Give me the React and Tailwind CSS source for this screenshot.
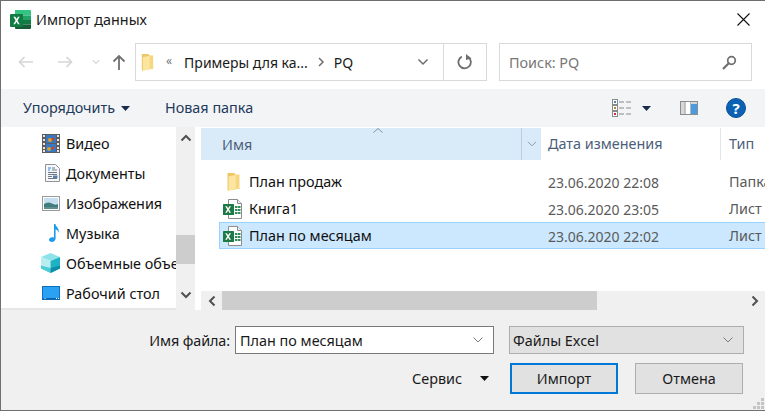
import React from 'react';

const ChevronDown = ({ className = '', color = '#6d6d6d', w = 1.5 }) => (
  <svg width="12" height="8" viewBox="0 0 12 8" className={className}>
    <path d="M1.5 1.5 6 6l4.5-4.5" fill="none" stroke={color} strokeWidth={w} />
  </svg>
);

const Caret = ({ color = '#1b2b4b', className = '' }) => (
  <svg width="9" height="5" viewBox="0 0 9 5" className={className}>
    <path d="M0 0h9L4.5 5z" fill={color} />
  </svg>
);

const ExcelLogo = () => (
  <svg width="21" height="20" viewBox="0 0 21 20">
    <path d="M5 0h15a1 1 0 0 1 1 1v4.5H5z" fill="#33c481" />
    <rect x="13" y="5.5" width="8" height="4.5" fill="#21a366" />
    <rect x="5" y="5.5" width="8" height="4.5" fill="#107c41" />
    <rect x="13" y="10" width="8" height="4.5" fill="#107c41" />
    <rect x="5" y="10" width="8" height="5" fill="#185c37" />
    <path d="M5 14.5h16V18a1 1 0 0 1-1 1H6a1 1 0 0 1-1-1z" fill="#185c37" />
    <rect x="0" y="4" width="13" height="13" rx="1" fill="#107c41" />
    <path d="M3.4 6.8h1.9l1.3 2.3 1.3-2.3h1.8l-2.2 3.7 2.2 3.7H7.9l-1.4-2.4-1.4 2.4H3.3l2.3-3.7z" fill="#fff" />
  </svg>
);

const ExcelFile = () => (
  <svg width="22" height="22" viewBox="0 0 22 22">
    <path d="M6.5 1.5h9l4 4v15h-13z" fill="#fff" stroke="#8c8c8c" />
    <path d="M15.5 1.5v4h4" fill="#eee" stroke="#8c8c8c" />
    <g fill="#2f8f5b">
      <rect x="13" y="8" width="2.5" height="2" />
      <rect x="16" y="8" width="2.5" height="2" />
      <rect x="13" y="11" width="2.5" height="2" />
      <rect x="16" y="11" width="2.5" height="2" />
      <rect x="13" y="14" width="2.5" height="2" />
      <rect x="16" y="14" width="2.5" height="2" />
    </g>
    <rect x="1" y="6" width="11" height="11" rx="0.5" fill="#1d7a45" />
    <path d="M3.2 8.2h1.7l1.2 2 1.2-2H9l-2 3.2 2 3.3H7.3l-1.2-2.1-1.2 2.1H3.2l2-3.3z" fill="#fff" />
  </svg>
);

const Folder = ({ h = 19 }) => (
  <svg width="13" height={h} viewBox="0 0 13 19">
    <path d="M1 1h6.500l1 1.500V17.500L1 18.500z" fill="#eec766" />
    <path d="M8.500 2.500H12.500V17H8.500z" fill="#f6d67f" />
    <path d="M1 4.500 8.500 3v14.500L1 18.500z" fill="#fbe59f" />
    <path d="M1 1v17.500" stroke="#e2b84f" strokeWidth="0.7" />
  </svg>
);

const VideoIcon = () => (
  <svg width="18" height="19" viewBox="0 0 18 19">
    <rect width="18" height="19" fill="#5c5c5c" />
    <g fill="#e8e8e8">
      <rect x="1" y="1" width="2" height="2" /><rect x="1" y="5" width="2" height="2" />
      <rect x="1" y="9" width="2" height="2" /><rect x="1" y="13" width="2" height="2" />
      <rect x="1" y="16" width="2" height="2" /><rect x="15" y="1" width="2" height="2" />
      <rect x="15" y="5" width="2" height="2" /><rect x="15" y="9" width="2" height="2" />
      <rect x="15" y="13" width="2" height="2" /><rect x="15" y="16" width="2" height="2" />
    </g>
    <rect x="4" y="1" width="10" height="8" fill="#3b78c4" />
    <rect x="4" y="10" width="10" height="8" fill="#3b78c4" />
    <circle cx="8" cy="6" r="2" fill="#d9a02c" /><circle cx="11" cy="5" r="1.5" fill="#c8452e" />
    <circle cx="7" cy="15" r="2" fill="#d9a02c" /><circle cx="11" cy="14" r="1.5" fill="#c8452e" />
  </svg>
);

const DocIcon = () => (
  <svg width="15" height="18" viewBox="0 0 15 18">
    <path d="M.5.5h10l4 4v13H.5z" fill="#f5f7fa" stroke="#8f9499" />
    <path d="M3 4h3M3 6h2" stroke="#2f86d9" strokeWidth="1.2" />
    <path d="M7 4h3M7 6h5M3 8.5h9M3 10.5h9M3 12.5h4M3 14.5h9" stroke="#6d7a88" />
    <rect x="8" y="11.5" width="4.5" height="2.5" fill="#5a7fa6" />
  </svg>
);

const ImageIcon = () => (
  <svg width="18" height="15" viewBox="0 0 18 15">
    <rect x="0.5" y="0.5" width="17" height="14" fill="#fff" stroke="#9a9a9a" />
    <rect x="2" y="2" width="14" height="11" fill="#c4dff0" />
    <path d="M2 8c3-2 6-2 9 0 2 1 3.5 1 5 0v5H2z" fill="#3f7c7d" />
    <path d="M2 11h14v2H2z" fill="#5f9090" />
  </svg>
);

const MusicIcon = () => (
  <svg width="12" height="20" viewBox="0 0 12 20">
    <path d="M6 1h1.4c.3 3 4.4 4 3.2 9-.4-2.500-2-3.400-3-3.800V15.500c0 2.300-2.400 3.800-4.600 3.300C.9 18.400.3 16.500 1.700 15.200c1.200-1.100 3-1.300 4.300-.7z" fill="#1a9bf0" />
  </svg>
);

const CubeIcon = () => (
  <svg width="19" height="20" viewBox="0 0 19 20">
    <path d="M9.500 0 19 4 9.500 8 0 4z" fill="#8ee3e8" />
    <path d="M0 4l9.500 4v12L0 15.500z" fill="#b7eef0" />
    <path d="M19 4 9.500 8v12l9.500-4.500z" fill="#1fb1c4" />
    <path d="M0 12.500 9.500 15v5L0 15.500z" fill="#4fcbd6" />
    <path d="M19 12.500 9.500 15v5l9.500-4.500z" fill="#0d8fa8" />
  </svg>
);

const DesktopIcon = () => (
  <svg width="18" height="14" viewBox="0 0 18 14">
    <rect x="0.5" y="0.500" width="17" height="13" fill="#2aa1f2" stroke="#0d6fc0" />
    <path d="M1 12h16v1.500H1z" fill="#0b64ad" />
    <path d="M2.500 12.500h1M14 12.500h1M16 12.500h1" stroke="#fff" />
  </svg>
);

const ListViewIcon = () => (
  <svg width="19" height="18" viewBox="0 0 19 18">
    <g fill="#fff" stroke="#8a8a8a">
      <rect x="0.5" y="0.500" width="5" height="5" />
      <rect x="0.500" y="6.500" width="5" height="5" />
      <rect x="0.500" y="12.500" width="5" height="5" />
    </g>
    <rect x="2" y="2" width="2" height="2" fill="#3b86c9" />
    <rect x="2" y="8" width="2" height="2" fill="#b58a2f" />
    <rect x="2" y="14" width="2" height="2" fill="#cc3333" />
    <path d="M7 3h5M14 3h5M7 9h5M14 9h5M7 15h5M14 15h5" stroke="#8a8a8a" />
  </svg>
);

const PaneIcon = () => (
  <svg width="18" height="14" viewBox="0 0 18 14">
    <rect x="0.500" y="0.500" width="17" height="13" fill="#fff" stroke="#8d8d8d" />
    <path d="M1 1h3.500v12H1z" fill="#d8d8d8" />
    <path d="M5 1v12" stroke="#8d8d8d" />
    <path d="M10.500 1v12" stroke="#b5b5b5" />
    <path d="M11 3h6v10h-6z" fill="#4a9ae0" />
    <path d="M11 1h6v2h-6z" fill="#d6d6d6" />
  </svg>
);

const navItems = [
  { label: 'Видео', icon: <VideoIcon /> },
  { label: 'Документы', icon: <DocIcon /> },
  { label: 'Изображения', icon: <ImageIcon /> },
  { label: 'Музыка', icon: <MusicIcon /> },
  { label: 'Объемные объекты', icon: <CubeIcon /> },
  { label: 'Рабочий стол', icon: <DesktopIcon /> },
];

const files = [
  { name: 'План продаж', date: '23.06.2020 22:08', type: 'Папка с файлами', icon: <Folder /> },
  { name: 'Книга1', date: '23.06.2020 23:05', type: 'Лист Microsoft Excel', icon: <ExcelFile /> },
  { name: 'План по месяцам', date: '23.06.2020 22:02', type: 'Лист Microsoft Excel', icon: <ExcelFile />, selected: true },
];

export default function App() {
  return (
    <div className="w-[765px] h-[411px] overflow-hidden bg-white flex flex-col border-t border-l border-b border-[#6f6f6f] text-[14.4px] leading-none text-black font-['Noto_Sans',sans-serif]">
      {/* title bar */}
      <div className="h-[42px] shrink-0 flex items-center pl-[9px]">
        <div className="-mt-[5px]"><ExcelLogo /></div>
        <span className="ml-[5px] -mt-[3px] text-[#1a1a1a]">Импорт данных</span>
        <svg width="13" height="13" viewBox="0 0 13 13" className="ml-auto mr-[15px] -mt-[5px]">
          <path d="M.5.5l12 12M12.500.5l-12 12" stroke="#111" strokeWidth="1.100" />
        </svg>
      </div>

      {/* address row */}
      <div className="h-[46px] shrink-0 flex items-start">
        <div className="w-[134px] h-[38px] shrink-0 flex items-center pl-[17px]">
          <svg width="16" height="12" viewBox="0 0 16 12"><path d="M15 6H2M6.500 1 1.500 6l5 5" fill="none" stroke="#d6d6d6" strokeWidth="1.700" /></svg>
          <svg width="16" height="12" viewBox="0 0 16 12" className="ml-[23px]"><path d="M1 6h13M9.500 1l5 5-5 5" fill="none" stroke="#d6d6d6" strokeWidth="1.700" /></svg>
          <ChevronDown color="#d6d6d6" className="ml-[17px] scale-75" />
          <svg width="14" height="16" viewBox="0 0 14 16" className="ml-[10px]"><path d="M7 16V2M1.500 7.500 7 2l5.500 5.500" fill="none" stroke="#6f6f6f" strokeWidth="1.800" /></svg>
        </div>
        <div className="w-[352px] h-[38px] shrink-0 border border-[#d9d9d9] flex items-center text-[14px]">
          <div className="ml-[5px]"><Folder h={18} /></div>
          <span className="ml-[12px] text-[#777] text-[12px] -mt-[2px]">«</span>
          <span className="ml-[12px] pt-[2px] text-[#1a1a1a]">Примеры для ка...</span>
          <svg width="7" height="10" viewBox="0 0 7 10" className="ml-[10px]"><path d="M1 1l4 4-4 4" fill="none" stroke="#6d6d6d" strokeWidth="1.500" /></svg>
          <span className="ml-[9px] pt-[2px] text-[#1a1a1a]">PQ</span>
          <ChevronDown className="ml-auto mr-[14px]" />
          <div className="w-[43px] h-full border-l border-[#d9d9d9] flex items-center justify-center">
            <svg width="16" height="16" viewBox="0 0 16 16">
              <path d="M10.800 2.800A6.200 6.200 0 1 1 4.800 2.600" fill="none" stroke="#6d6d6d" strokeWidth="1.800" />
              <path d="M9 0v6l5.500-1.500z" fill="#6d6d6d" />
            </svg>
          </div>
        </div>
        <div className="ml-[12px] w-[253px] h-[38px] shrink-0 border border-[#d9d9d9] flex items-center justify-between pl-[9px] pr-[14px]">
          <span className="text-[#777] pt-[2px]">Поиск: PQ</span>
          <svg width="15" height="15" viewBox="0 0 15 15"><circle cx="9.500" cy="5.500" r="3.800" fill="none" stroke="#6d6d6d" strokeWidth="1.700" /><path d="M6.500 8.500 1 14" stroke="#6d6d6d" strokeWidth="2.200" /></svg>
        </div>
      </div>

      {/* toolbar */}
      <div className="h-[38px] shrink-0 bg-[#f3f4f6] flex items-center pl-[22px] text-[#1e395b]">
        <span>Упорядочить</span>
        <Caret className="ml-[6px]" />
        <span className="ml-[35px]">Новая папка</span>
        <div className="ml-auto flex items-center mr-[19px]">
          <ListViewIcon />
          <Caret className="ml-[11px]" />
          <div className="ml-[29px]"><PaneIcon /></div>
          <div className="ml-[28px] w-[20px] h-[20px] rounded-full bg-[#0b62b5] border border-[#0a4f94] flex items-center justify-center text-white font-bold text-[15px]">?</div>
        </div>
      </div>

      {/* main area */}
      <div className="h-[183px] shrink-0 flex bg-white">
        <div className="w-[175px] shrink-0 flex flex-col overflow-hidden border-b-2 border-[#e6e6e6]">
          {navItems.map((item) => (
            <div key={item.label} className="h-[30px] shrink-0 flex items-center whitespace-nowrap first:mt-[1px]">
              <div className="w-[65px] shrink-0 flex justify-end pr-[6px]">{item.icon}</div>
              <span className="text-[#111] pt-[2px]">{item.label}</span>
            </div>
          ))}
        </div>
        <div className="w-[19px] shrink-0 bg-[#f0f0f0] flex flex-col items-center">
          <ChevronDown color="#505050" w={2} className="mt-[7px] rotate-180" />
          <div className="mt-[93px] w-full h-[29px] bg-[#cdcdcd]" />
          <ChevronDown color="#505050" w={2} className="mt-[27px]" />
        </div>
        <div className="w-[6px] shrink-0" />

        <div className="flex-1 min-w-0 flex flex-col overflow-hidden">
          <div className="h-[32px] shrink-0 mt-px flex text-[#4c607a]">
            <div className="w-[340px] shrink-0 bg-[#d9ebf9] relative flex">
              <span className="pl-[21px] pt-[2px] self-center">Имя</span>
              <svg width="10" height="5" viewBox="0 0 10 5" className="absolute left-[172px] top-0"><path d="M.5 4.500 5 .5l4.500 4" fill="none" stroke="#8a8f96" /></svg>
              <div className="ml-auto w-[20px] border-l border-[#b8cfe0] flex items-center justify-center">
                <ChevronDown color="#8a8f96" w={1} className="scale-90" />
              </div>
            </div>
            <span className="w-[179px] shrink-0 pl-[7px] self-center whitespace-nowrap">Дата изменения</span>
            <span className="border-l border-[#e5e5e5] pl-[8px] flex items-center h-full">Тип</span>
          </div>

          <div className="flex-1 min-h-0 pt-[8px] pl-[18px]">
            {files.map((f) => (
              <div key={f.name} className={`h-[27px] w-[600px] flex items-center whitespace-nowrap border ${f.selected ? 'bg-[#cce8ff] border-[#99d1ff]' : 'border-transparent'}`}>
                <div className="w-[26px] shrink-0 flex justify-center">{f.icon}</div>
                <span className="w-[302px] shrink-0 pl-[3px] pt-[2px] text-[#111]">{f.name}</span>
                <span className="w-[181px] shrink-0 pt-[2px] text-[14px] text-[#5a5a5a]">{f.date}</span>
                <span className="pt-[2px] text-[#5a5a5a]">{f.type}</span>
              </div>
            ))}
          </div>

          <div className="h-[19px] shrink-0 bg-[#f0f0f0] flex items-center">
            <ChevronDown color="#505050" w={2} className="ml-[5px] rotate-90" />
            <div className="ml-[4px] w-[375px] h-full bg-[#cdcdcd]" />
            <ChevronDown color="#505050" w={2} className="ml-auto mr-[4px] -rotate-90" />
          </div>
        </div>
      </div>

      {/* footer */}
      <div className="flex-1 min-h-0 bg-[#f0f0f0] flex flex-col relative text-[#1a1a1a]">
        <div className="mt-[16px] flex items-center">
          <span className="w-[229px] shrink-0 pt-[2px] text-right tracking-[-0.1px]">Имя файла:</span>
          <div className="ml-[5px] w-[259px] h-[28px] bg-white border border-[#7a7a7a] flex items-center justify-between pl-[4px] pr-[9px]">
            <span className="pt-[2px]">План по месяцам</span>
            <ChevronDown color="#7a7a7a" w={1} />
          </div>
          <div className="ml-[15px] w-[235px] h-[28px] bg-[#e1e1e1] border border-[#adadad] flex items-center justify-between pl-[3px] pr-[9px]">
            <span className="pt-[2px]">Файлы Excel</span>
            <ChevronDown color="#7a7a7a" w={1} />
          </div>
        </div>
        <div className="mt-[9px] flex items-center">
          <span className="ml-[411px] pt-[2px]">Сервис</span>
          <Caret color="#111" className="ml-[18px]" />
          <button className="ml-[21px] w-[108px] h-[31px] pt-[1px] bg-[#e1e1e1] border-2 border-[#0078d7]">Импорт</button>
          <button className="ml-[17px] w-[108px] h-[31px] pt-[1px] bg-[#e1e1e1] border border-[#adadad]">Отмена</button>
        </div>
        <svg width="11" height="11" viewBox="0 0 11 11" className="absolute right-[1px] bottom-[1px]">
          <g fill="#c4c4c4">
            <rect x="8" y="0" width="3" height="3" /><rect x="4" y="4" width="3" height="3" />
            <rect x="8" y="4" width="3" height="3" /><rect x="0" y="8" width="3" height="3" />
            <rect x="4" y="8" width="3" height="3" /><rect x="8" y="8" width="3" height="3" />
          </g>
        </svg>
      </div>
    </div>
  );
}
